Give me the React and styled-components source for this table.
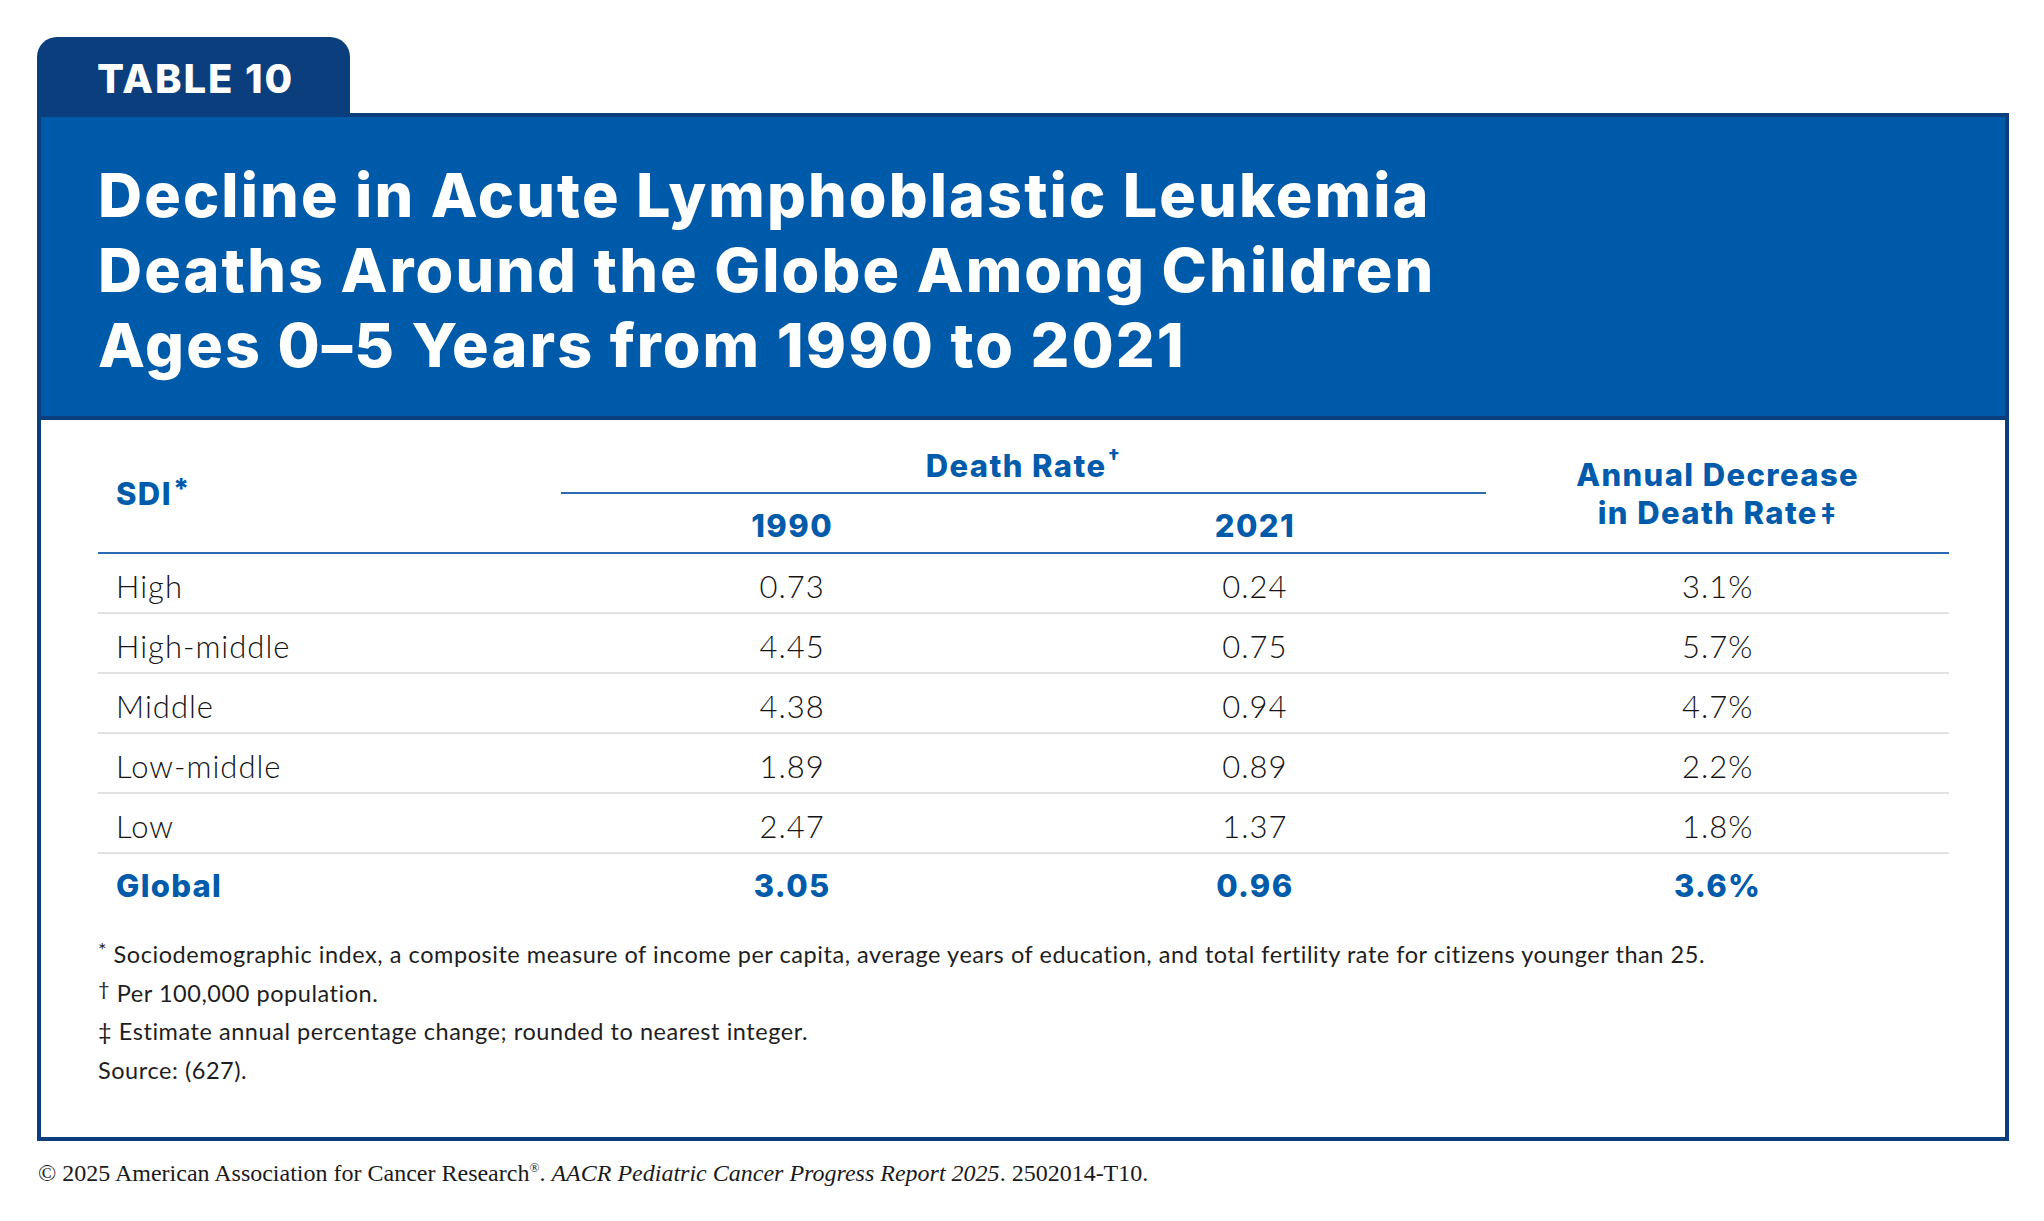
import React from "react";
import styled, { createGlobalStyle } from "styled-components";

const NAVY = "#0b3e7c";
const BLUE = "#005aaa";
const HEAD_BLUE = "#005bab";
const RULE_BLUE = "#2a6bb4";

const rows = [
  { label: "High", y1990: "0.73", y2021: "0.24", change: "3.1%" },
  { label: "High-middle", y1990: "4.45", y2021: "0.75", change: "5.7%" },
  { label: "Middle", y1990: "4.38", y2021: "0.94", change: "4.7%" },
  { label: "Low-middle", y1990: "1.89", y2021: "0.89", change: "2.2%" },
  { label: "Low", y1990: "2.47", y2021: "1.37", change: "1.8%" },
];

const GlobalStyle = createGlobalStyle`
  html, body {
    margin: 0;
    padding: 0;
    background: #ffffff;
  }
  body {
    font-family: "Lato", "Liberation Sans", sans-serif;
  }
`;

function App() {
  return (
    <>
      <GlobalStyle />
      <Figure>
        <Tab>TABLE 10</Tab>
        <Box>
          <Header>
            <Title>
              Decline in Acute Lymphoblastic Leukemia
              <br />
              Deaths Around the Globe Among Children
              <br />
              Ages 0–5 Years from 1990 to 2021
            </Title>
          </Header>
          <Body>
            <HeadGrid>
              <SideHead $align="left">
                SDI<Star>*</Star>
              </SideHead>
              <GroupHead>
                Death Rate<Sup>†</Sup>
              </GroupHead>
              <YearHead $col={2}>1990</YearHead>
              <YearHead $col={3}>2021</YearHead>
              <SideHead $align="center">
                Annual Decrease
                <br />
                in Death Rate<Dagger>‡</Dagger>
              </SideHead>
            </HeadGrid>

            {rows.map((r) => (
              <Row key={r.label}>
                <Label>{r.label}</Label>
                <Cell>{r.y1990}</Cell>
                <Cell>{r.y2021}</Cell>
                <Cell>{r.change}</Cell>
              </Row>
            ))}
            <Row $total>
              <Label $total>Global</Label>
              <Cell $total>3.05</Cell>
              <Cell $total>0.96</Cell>
              <Cell $total>3.6%</Cell>
            </Row>

            <Notes>
              <p>
                <NoteMark>*</NoteMark> Sociodemographic index, a composite measure of income per
                capita, average years of education, and total fertility rate for citizens younger
                than 25.
              </p>
              <p>
                <NoteMark>†</NoteMark> Per 100,000 population.
              </p>
              <p>‡ Estimate annual percentage change; rounded to nearest integer.</p>
              <p>Source: (627).</p>
            </Notes>
          </Body>
        </Box>
        <Credit>
          © 2025 American Association for Cancer Research<sup>®</sup>.{" "}
          <em>AACR Pediatric Cancer Progress Report 2025</em>. 2502014-T10.
        </Credit>
      </Figure>
    </>
  );
}

const Figure = styled.div`
  width: 1972px;
  margin: 37px 0 0 37px;
`;

const Tab = styled.div`
  width: 313px;
  height: 76px;
  box-sizing: border-box;
  padding: 22px 0 0 60px;
  background: ${NAVY};
  border-radius: 20px 20px 0 0;
  color: #ffffff;
  font-family: "Inter", "Liberation Sans", sans-serif;
  font-weight: 800;
  font-size: 40px;
  line-height: 40px;
  letter-spacing: 1.9px;
`;

const Box = styled.div`
  border: 4px solid ${NAVY};
  background: #ffffff;
`;

const Header = styled.div`
  background: ${BLUE};
  border-bottom: 4px solid ${NAVY};
  padding: 41px 40px 33px 57px;
`;

const Title = styled.h1`
  margin: 0;
  color: #ffffff;
  font-family: "Inter", "Liberation Sans", sans-serif;
  font-weight: 800;
  font-size: 61px;
  line-height: 75px;
  letter-spacing: 2.1px;
`;

const Body = styled.div`
  padding: 0 56px 48px 57px;
`;

const HeadGrid = styled.div`
  display: grid;
  grid-template-columns: repeat(4, 1fr);
  grid-template-rows: auto auto;
  padding: 26px 0 6px;
  border-bottom: 2px solid ${RULE_BLUE};
  color: ${HEAD_BLUE};
  font-family: "Inter", "Liberation Sans", sans-serif;
  font-weight: 800;
  font-size: 31px;
  line-height: 40px;
  letter-spacing: 1.4px;
`;

const SideHead = styled.div`
  grid-row: 1 / 3;
  align-self: center;
  margin-bottom: ${(p) => (p.$align === "left" ? "4px" : "5px")};
  text-align: ${(p) => p.$align};
  padding-left: ${(p) => (p.$align === "left" ? "18px" : "0")};
  line-height: ${(p) => (p.$align === "left" ? "40px" : "38px")};
`;

const GroupHead = styled.div`
  grid-column: 2 / 4;
  grid-row: 1;
  text-align: center;
  padding-bottom: 6px;
  border-bottom: 2px solid ${RULE_BLUE};
`;

const YearHead = styled.div`
  grid-column: ${(p) => p.$col};
  grid-row: 2;
  text-align: center;
  padding-top: 12px;
`;

const Star = styled.span`
  font-size: 0.9em;
  line-height: 0;
  vertical-align: 0.2em;
  margin-left: 1px;
`;

const Sup = styled.span`
  font-size: 0.65em;
  line-height: 0;
  vertical-align: 0.65em;
  margin-left: 1px;
`;

const Dagger = styled.span`
  font-size: 0.9em;
  line-height: 0;
  font-weight: 700;
  margin-left: 2px;
`;

const Row = styled.div`
  display: grid;
  grid-template-columns: repeat(4, 1fr);
  padding-top: 6px;
  border-bottom: ${(p) => (p.$total ? "none" : "2px solid #e2e2e2")};
`;

const Cell = styled.div`
  text-align: center;
  line-height: 52px;
  font-family: ${(p) =>
    p.$total ? `"Inter", "Liberation Sans", sans-serif` : `"Lato", "Liberation Sans", sans-serif`};
  font-weight: ${(p) => (p.$total ? 800 : 300)};
  font-size: 31px;
  letter-spacing: ${(p) => (p.$total ? "1.3px" : "1px")};
  color: ${(p) => (p.$total ? HEAD_BLUE : "#141414")};
`;

const Label = styled(Cell)`
  text-align: left;
  padding-left: 18px;
`;

const Notes = styled.div`
  margin-top: 23px;
  font-family: "Lato", "Liberation Sans", sans-serif;
  font-weight: 400;
  font-size: 23.5px;
  line-height: 38.5px;
  letter-spacing: 0.55px;
  color: #1e1e1e;

  p {
    margin: 0;
  }
`;

const NoteMark = styled.span`
  font-size: 0.85em;
  line-height: 0;
  vertical-align: 0.3em;
`;

const Credit = styled.div`
  margin-top: 19px;
  padding-left: 1px;
  font-family: "Liberation Serif", serif;
  font-size: 24px;
  color: #1a1a1a;

  sup {
    font-size: 0.55em;
    line-height: 0;
    vertical-align: 0.7em;
  }
`;

export default App;
